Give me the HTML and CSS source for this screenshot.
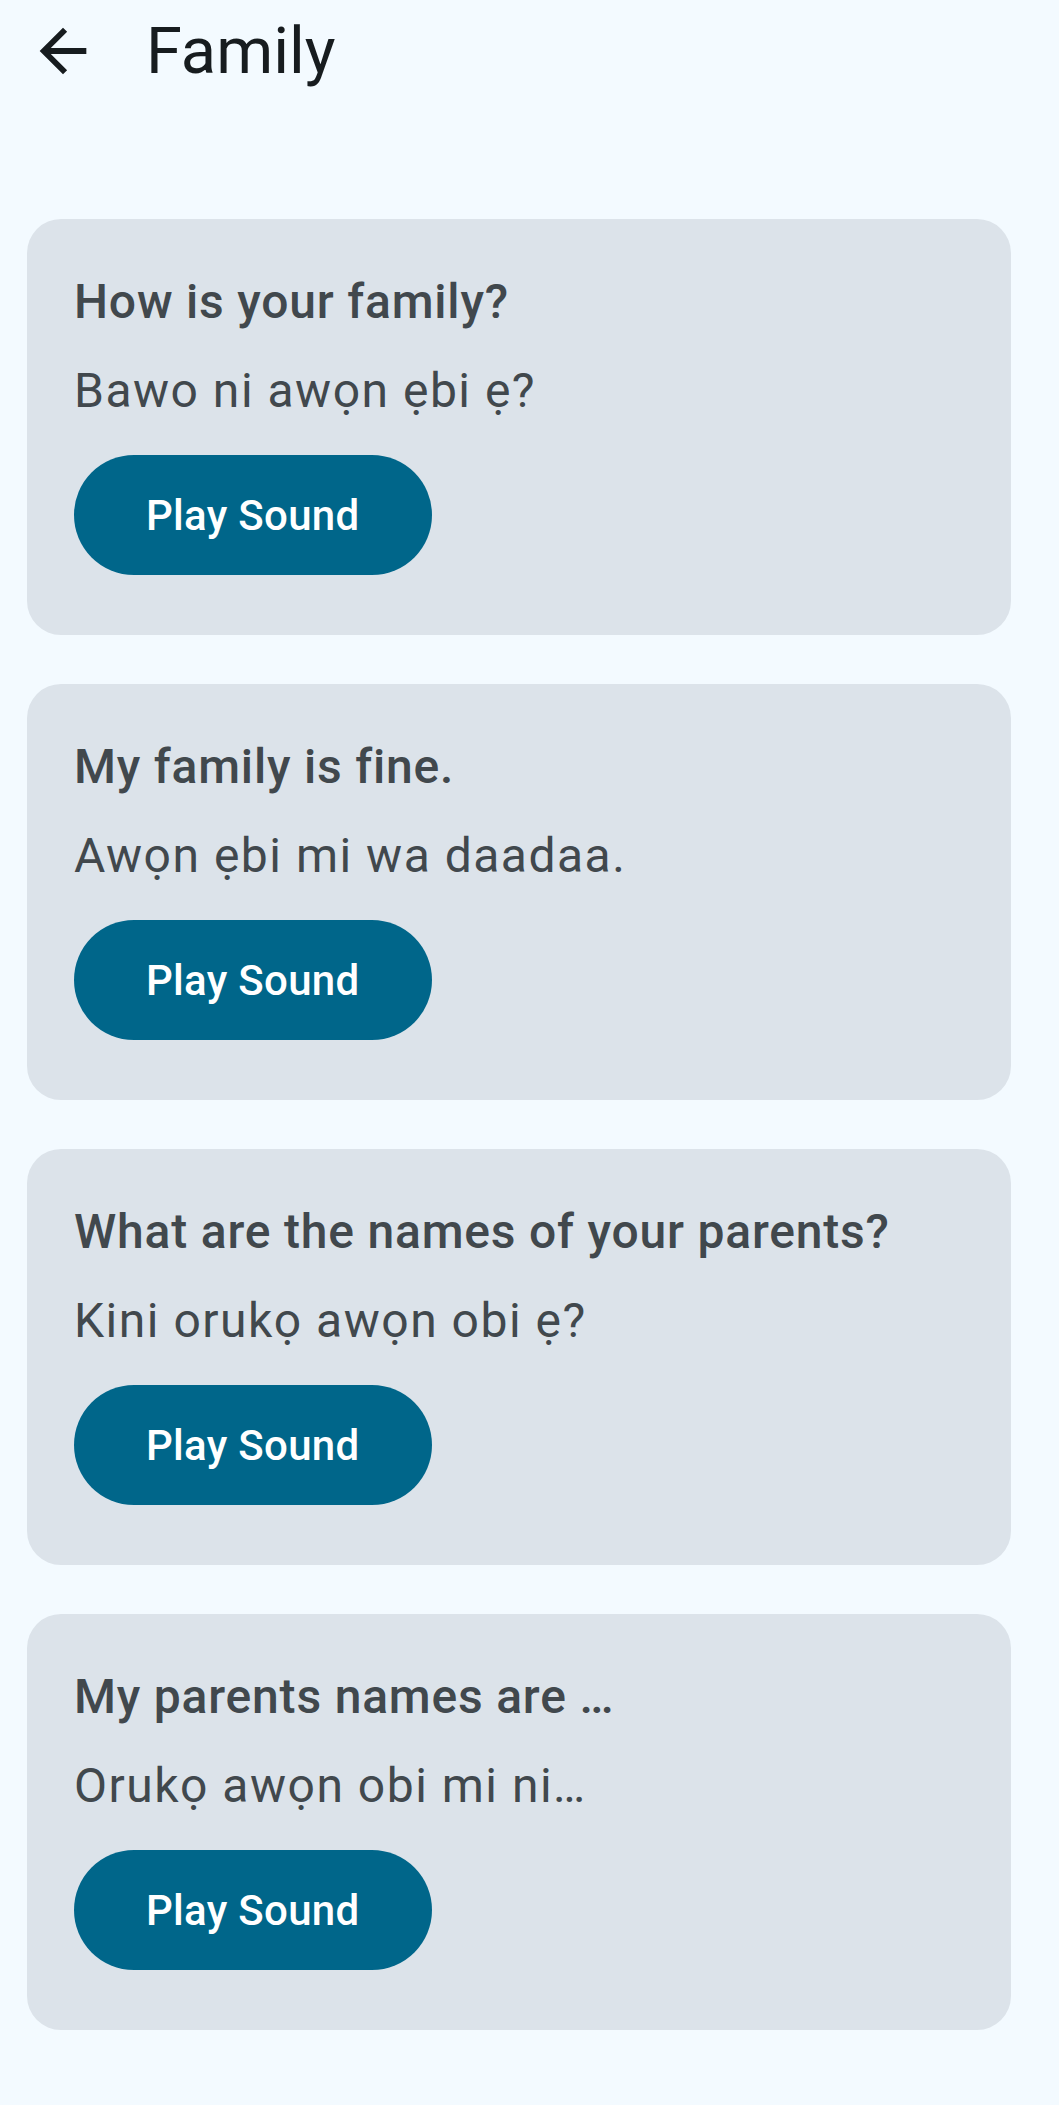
FILE: index.html
```html
<!DOCTYPE html>
<html lang="en">
  <head>
    <meta charset="utf-8" />
    <meta name="viewport" content="width=device-width, initial-scale=1" />
    <title>Family</title>
    <link rel="stylesheet" href="styles.css">
  </head>

  <body>
    <header class="topbar">
      <button type="button" class="back-btn" aria-label="Back">
        <svg viewBox="0 0 24 24" width="70" height="70">
          <path d="M20 11H7.83l5.59-5.59L12 4l-8 8 8 8 1.41-1.41L7.83 13H20v-2z" />
        </svg>
      </button>
      <h1 class="topbar-title">Family</h1>
    </header>

    <main class="phrase-list">
      <!-- one card per phrase -->
      <div class="phrase-card">
        <h2 class="phrase-en">How is your family?</h2>
        <p class="phrase-yo">Bawo ni awọn ẹbi ẹ?</p>
        <button type="button" class="play-btn">Play Sound</button>
      </div>

      <div class="phrase-card">
        <h2 class="phrase-en">My family is fine.</h2>
        <p class="phrase-yo">Awọn ẹbi mi wa daadaa.</p>
        <button type="button" class="play-btn">Play Sound</button>
      </div>

      <div class="phrase-card">
        <h2 class="phrase-en">What are the names of your parents?</h2>
        <p class="phrase-yo">Kini orukọ awọn obi ẹ?</p>
        <button type="button" class="play-btn">Play Sound</button>
      </div>

      <div class="phrase-card">
        <h2 class="phrase-en">My parents names are …</h2>
        <p class="phrase-yo">Orukọ awọn obi mi ni…</p>
        <button type="button" class="play-btn">Play Sound</button>
      </div>
    </main>
  </body>
</html>
```

FILE: styles.css
```css
body {
  margin: 0;
  background-color: #f3faff;
  font-family: Roboto, "Noto Sans", sans-serif;
  color: #41484d;
}

.topbar {
  display: flex;
  align-items: center;
  height: 101px;
  gap: 48px;
}

.back-btn {
  display: flex;
  margin-left: 28px;
  padding: 0;
  border: none;
  background: none;
  cursor: pointer;
}

.back-btn svg {
  fill: #171c1f;
}

.topbar-title {
  margin: 0;
  font-size: 65px;
  font-weight: 400;
  color: #171c1f;
}

.phrase-list {
  display: flex;
  flex-direction: column;
  gap: 49px;
  padding: 118px 48px 0 27px;
}

.phrase-card {
  display: flex;
  flex-direction: column;
  align-items: flex-start;
  height: 416px;
  box-sizing: border-box;
  padding: 55px 47px 0;
  border-radius: 34px;
  background-color: #dce3ea;
}

.phrase-en {
  margin: 0;
  font-size: 48px;
  line-height: 56px;
  font-weight: 500;
  letter-spacing: 0.8px;
}

.phrase-yo {
  margin: 33px 0 0;
  font-size: 48px;
  line-height: 56px;
  font-weight: 400;
  letter-spacing: 1.5px;
}

.play-btn {
  margin-top: 36px;
  height: 120px;
  padding: 0 72px;
  border: none;
  border-radius: 60px;
  background-color: #00668a;
  color: #fff;
  font-family: Roboto, sans-serif;
  font-size: 42px;
  font-weight: 500;
  letter-spacing: 0.3px;
  cursor: pointer;
}
```
